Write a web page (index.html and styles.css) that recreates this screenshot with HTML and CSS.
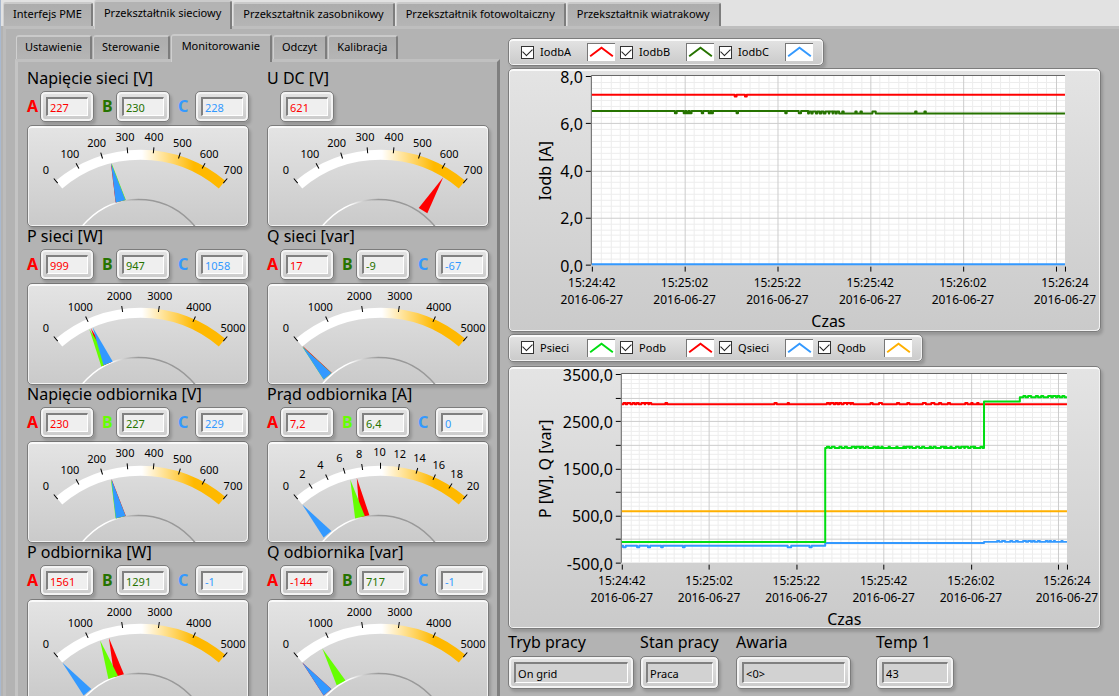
FILE: index.html
```html
<!DOCTYPE html>
<html lang="pl">
<head>
<meta charset="utf-8">
<title>Przekształtnik sieciowy</title>
<link rel="stylesheet" href="styles.css">
</head>
<body>
<div class="app">
  <nav class="tabs tabs-main">
    <button class="tab">Interfejs PME</button>
    <button class="tab tab-active">Przekształtnik sieciowy</button>
    <button class="tab">Przekształtnik zasobnikowy</button>
    <button class="tab">Przekształtnik fotowoltaiczny</button>
    <button class="tab">Przekształtnik wiatrakowy</button>
  </nav>
  <div class="workspace">
    <section class="side">
      <nav class="tabs tabs-inner">
        <button class="tab">Ustawienie</button>
        <button class="tab">Sterowanie</button>
        <button class="tab tab-active">Monitorowanie</button>
        <button class="tab">Odczyt</button>
        <button class="tab">Kalibracja</button>
      </nav>
      <div class="meters" id="meters"></div>
    </section>
    <section class="trends">
      <div class="legend panel">
        <div class="legend-item"><input type="checkbox" id="l1" checked><label for="l1">IodbA</label><svg class="swatch" viewBox="0 0 28 18" stroke="#ff0000"><path d="M2 13 L14 4 L26 13"/></svg></div>
        <div class="legend-item"><input type="checkbox" id="l2" checked><label for="l2">IodbB</label><svg class="swatch" viewBox="0 0 28 18" stroke="#267300"><path d="M2 13 L14 4 L26 13"/></svg></div>
        <div class="legend-item"><input type="checkbox" id="l3" checked><label for="l3">IodbC</label><svg class="swatch" viewBox="0 0 28 18" stroke="#3399ff"><path d="M2 13 L14 4 L26 13"/></svg></div>
      </div>
      <div class="chart panel" id="chart-current"></div>
      <div class="legend panel">
        <div class="legend-item"><input type="checkbox" id="l4" checked><label for="l4">Psieci</label><svg class="swatch" viewBox="0 0 28 18" stroke="#00dd11"><path d="M2 13 L14 4 L26 13"/></svg></div>
        <div class="legend-item"><input type="checkbox" id="l5" checked><label for="l5">Podb</label><svg class="swatch" viewBox="0 0 28 18" stroke="#ff0000"><path d="M2 13 L14 4 L26 13"/></svg></div>
        <div class="legend-item"><input type="checkbox" id="l6" checked><label for="l6">Qsieci</label><svg class="swatch" viewBox="0 0 28 18" stroke="#3399ff"><path d="M2 13 L14 4 L26 13"/></svg></div>
        <div class="legend-item"><input type="checkbox" id="l7" checked><label for="l7">Qodb</label><svg class="swatch" viewBox="0 0 28 18" stroke="#ffb000"><path d="M2 13 L14 4 L26 13"/></svg></div>
      </div>
      <div class="chart chart-power panel" id="chart-power"></div>
      <div class="status">
        <div class="status-item mode"><label for="s1">Tryb pracy</label><span class="field"><input id="s1" type="text" readonly value="On grid"></span></div>
        <div class="status-item state"><label for="s2">Stan pracy</label><span class="field"><input id="s2" type="text" readonly value="Praca"></span></div>
        <div class="status-item fault"><label for="s3">Awaria</label><span class="field"><input id="s3" type="text" readonly value="&lt;0&gt;"></span></div>
        <div class="status-item temp"><label for="s4">Temp 1</label><span class="field"><input id="s4" type="text" readonly value="43"></span></div>
      </div>
    </section>
  </div>
</div>
<script src="panel.js"></script>
</body>
</html>
```
FILE: styles.css
```css
* { box-sizing: border-box; }

html, body { margin: 0; height: 100%; }

body {
  background: #b3b3b3;
  color: #000;
  font: 11px/16px "Noto Sans", "Open Sans", sans-serif;
}

button, input { font: inherit; color: inherit; }

.app {
  height: 100vh;
  overflow: hidden;
  display: flex;
  flex-direction: column;
  border-left: 1px solid #a9b9cf;
}

/* Tabs */
.tabs { display: flex; align-items: flex-end; gap: 1px; }

.tab {
  height: 24px;
  padding: 0 9px 2px;
  border: 1px solid #d0d0d0;
  border-top: 2px solid #cacaca;
  border-right: 2px solid #7d7d7d;
  border-bottom: 0;
  border-radius: 3px 3px 0 0;
  background: linear-gradient(#adadad, #b5b5b5);
  white-space: nowrap;
}

.tab-active {
  position: relative;
  z-index: 1;
  padding-bottom: 6px;
  background: #b3b3b3;
}

.tabs-main {
  height: 26px;
  flex: none;
  padding-left: 2px;
  background: #e2e2e2;
}
.tabs-main .tab-active { height: 29px; margin-bottom: -3px; padding: 0 9px 6px; }

.workspace {
  flex: 1;
  min-height: 0;
  display: grid;
  grid-template-columns: minmax(0, 486fr) minmax(0, 594fr);
  gap: 8px;
  padding: 5px 18px 0 9px;
  margin-left: 2px;
  border-top: 3px solid #bebebe;
  border-left: 3px solid #bcbcbc;
}

.side { display: flex; flex-direction: column; min-height: 0; }
.tabs-inner { height: 25px; padding-left: 1px; flex: none; }
.tabs-inner .tab { padding: 0 8px 2px; }
.tabs-inner .tab-active { height: 28px; margin-bottom: -3px; padding: 0 10px 6px; }

/* Raised frames */
.panel, .field {
  border: 1px solid #7c7c7c;
  border-radius: 5px;
  background: linear-gradient(#e4e4e4, #cacaca);
  box-shadow: 2px 3px 3px rgba(0, 0, 0, .16), inset 0 0 0 2px #f4f4f4;
}
.panel { box-shadow: 2px 3px 3px rgba(0, 0, 0, .16), inset 0 2px 0 #fafafa, inset 1px 0 0 #f2f2f2, inset -1px -1px 0 #f2f2f2; }

.field { display: block; height: 31px; padding: 5px; }
.field input {
  display: block;
  width: 100%;
  height: 19px;
  padding: 0 2px;
  border: 2px solid #808080;
  border-right-color: #fff;
  border-bottom-color: #fff;
  border-width: 2px 1px 1px 2px;
  background: #efefef;
  outline: 0;
}

/* Meters */
.meters {
  flex: 1;
  min-height: 0;
  display: grid;
  grid-template-columns: repeat(2, minmax(0, 1fr));
  grid-auto-rows: min-content;
  column-gap: 18px;
  padding: 7px 8px 0 9px;
  border-top: 3px solid #c0c0c0;
  border-left: 3px solid #c4c4c4;
  border-right: 3px solid #7f7f7f;
}

.meter-title, .status-item label { font-size: 16px; line-height: 22px; font-weight: 400; margin: 0; white-space: nowrap; }
.meter-title { line-height: 18px; margin-bottom: 4px; }

.readings {
  display: grid;
  grid-template-columns: 13px 1fr 22px 1fr 25px 1fr;
  margin-bottom: 3px;
}
.readings label { font-size: 16px; line-height: 31px; font-weight: 700; }
.readings label + .field + label { padding-left: 8px; }
.readings .single { grid-column: 2; }
.phase-a { color: #ff0000; }
.phase-b { color: #267300; }
.phase-b-bright { color: #66ff00; }
.phase-c { color: #3399ff; }

.gauge { display: block; overflow: hidden; }
.gauge svg, .chart svg { display: block; width: 100%; height: auto; }
.chart svg { overflow: visible; }
svg text { font-family: "Noto Sans", "Open Sans", sans-serif; fill: #000; }
.scale-label { font-size: 11px; text-anchor: middle; }
.gauge-tick, .axis-tick { stroke: #000; fill: none; }

/* Trends */
.trends { padding-top: 4px; }

.legend {
  display: flex;
  width: max-content;
  height: 28px;
  padding: 0 10px 0 12px;
  align-items: center;
  gap: 5px;
}
.legend-item { display: flex; align-items: center; }
.legend-item label { width: 47px; font-size: 11px; }
.legend-item input {
  appearance: none;
  width: 13px;
  height: 13px;
  margin: 0 6px 0 0;
  border: 1px solid #333;
  background: #fff;
  display: grid;
  place-items: center;
}
.legend-item input:checked::before {
  content: "";
  width: 8px;
  height: 5px;
  margin-bottom: 3px;
  border-left: 1px solid #222;
  border-bottom: 1px solid #222;
  transform: rotate(-45deg);
}
.swatch {
  width: 28px;
  height: 18px;
  background: #fff;
  border-top: 1px solid #777;
  border-left: 1px solid #777;
  fill: none;
  stroke-width: 2;
}

.chart { margin: 2px 0; }
.chart-power { margin-top: 4px; }
.axis-value { font-size: 16px; text-anchor: end; }
.axis-title { font-size: 16px; text-anchor: middle; }
.axis-time { font-size: 12px; text-anchor: middle; }
.trace { fill: none; stroke-width: 2; stroke-linejoin: round; }

/* Status row */
.status { display: flex; align-items: flex-start; }
.status-item label { display: block; margin-bottom: 3px; }
.status-item .field { height: 33px; }
.status-item .field input { height: 21px; background: #d2d2d2; }
.mode { flex: 0 1 126px; margin-right: 6px; }
.state { flex: 0 1 79px; margin-right: 17px; }
.fault { flex: 0 1 115px; margin-right: 25px; }
.temp { flex: 0 1 78px; }
```
FILE: panel.js
```javascript
const RED = "#ff0000", LIME = "#66ff00", BLUE = "#3399ff";

const VOLTS = { max: 700, step: 100 };
const WATTS = { max: 5000, step: 1000 };
const AMPS = { max: 20, step: 2 };

const meters = [
  { title: "Napięcie sieci [V]", scale: VOLTS, values: ["227", "230", "228"] },
  { title: "U DC [V]", scale: VOLTS, values: ["621"] },
  { title: "P sieci [W]", scale: WATTS, values: ["999", "947", "1058"] },
  { title: "Q sieci [var]", scale: WATTS, values: ["17", "-9", "-67"] },
  { title: "Napięcie odbiornika [V]", scale: VOLTS, values: ["230", "227", "229"], bright: true },
  { title: "Prąd odbiornika [A]", scale: AMPS, values: ["7,2", "6,4", "0"], bright: true },
  { title: "P odbiornika [W]", scale: WATTS, values: ["1561", "1291", "-1"] },
  { title: "Q odbiornika [var]", scale: WATTS, values: ["-144", "717", "-1"] }
];

/* Gauge geometry: a sweep of 80.6 degrees around a centre below the frame. */
const CX = 113.5, CY = 155.7, HALF = 40.3;

function polar(r, deg, shift = 0) {
  const a = deg * Math.PI / 180;
  return [CX + r * Math.sin(a) + shift * Math.cos(a), CY - r * Math.cos(a) + shift * Math.sin(a)]
    .map(n => n.toFixed(1)).join(" ");
}

function gauge(meter, index) {
  const { max, step } = meter.scale;
  const angle = v => -HALF + 2 * HALF * Math.min(Math.max(v, 0), max) / max;
  let out = `<svg viewBox="1 1 220 100"><defs><linearGradient id="band${index}" gradientUnits="userSpaceOnUse" x1="115" x2="167" y1="0" y2="0">
    <stop offset="0" stop-color="#fff"/><stop offset="1" stop-color="#ffb900"/></linearGradient>
    <linearGradient id="hub${index}" x1="0" x2="1" y1="0" y2="0"><stop offset=".3" stop-color="#fff"/><stop offset=".5" stop-color="#999"/></linearGradient></defs>`;
  out += `<path d="M${polar(126, -HALF)} A126 126 0 0 1 ${polar(126, HALF)}" fill="none" stroke="url(#band${index})" stroke-width="10"/>`;
  out += `<circle cx="111.5" cy="147" r="72.5" fill="none" stroke="url(#hub${index})" stroke-width="1.5"/>`;
  for (let v = 0; v <= max; v += step) {
    const a = angle(v), [x, y] = polar(144.5, a).split(" ").map(Number);
    out += `<path class="gauge-tick" d="M${polar(128, a)} L${polar(134, a)}"/>`;
    out += `<text class="scale-label" x="${(Math.min(x, 208) - 1).toFixed(1)}" y="${(y + 4).toFixed(1)}">${v}</text>`;
  }
  const colors = [RED, LIME, BLUE];
  meter.values.forEach((text, i) => {
    const a = angle(parseFloat(text.replace(",", ".")));
    out += `<path fill="${colors[i]}" d="M${polar(121, a)} L${polar(82, a, -5)} L${polar(82, a, 5)} Z"/>`;
  });
  return out + "</svg>";
}

document.getElementById("meters").innerHTML = meters.map((m, i) => {
  const single = m.values.length === 1;
  const readings = m.values.map((v, k) => {
    const id = `m${i}-${k}`, phase = "phase-" + "abc"[k];
    const letter = k === 1 && m.bright ? "phase-b-bright" : phase;
    const label = single ? "" : `<label class="${letter}" for="${id}">${"ABC"[k]}</label>`;
    return `${label}<span class="field ${single ? "single" : ""}"><input class="${phase}" id="${id}" type="text" readonly aria-label="${m.title}" value="${v}"></span>`;
  }).join("");
  return `<article><h2 class="meter-title">${m.title}</h2><div class="readings">${readings}</div><div class="gauge panel">${gauge(m, i)}</div></article>`;
}).join("");

/* Flat base level, broken by short excursions to another level at the given times. */
function level(from, to, base, alt, bumps) {
  const pts = [[from, base]];
  bumps.forEach(([t, w]) => pts.push([t, base], [t, alt], [t + w, alt], [t + w, base]));
  pts.push([to, base]);
  return pts;
}

function ripple(from, to, every) {
  const bumps = [];
  let t = from, seed = 7;
  while (t < to) {
    seed = (seed * 31 + 11) % 97;
    bumps.push([t, 0.3 + (seed % 3) * 0.2]);
    t += 0.7 + (seed / 97) * every;
  }
  return bumps;
}

function chart(id, c) {
  const px = t => c.left + t * (c.right - c.left) / 102;
  const py = v => c.bottom - (v - c.min) * (c.bottom - c.top) / (c.max - c.min);
  const snap = n => Math.round(n) + 0.5;
  const w = c.right - c.left, h = c.bottom - c.top;
  let out = `<svg viewBox="1 1 592 262"><rect x="${c.left}" y="${c.top}" width="${w}" height="${h}" fill="#fff"/>`;
  let minor = "", major = "", ticks = "";
  for (let t = 2; t < 102; t += 2) {
    const d = `M${snap(px(t))} ${c.top}V${c.bottom}`;
    if (t % 20) minor += d; else major += d;
  }
  for (let i = 1; i < c.rows * c.sub; i++) {
    const d = `M${c.left} ${snap(c.top + i * h / (c.rows * c.sub))}H${c.right}`;
    if (i % c.sub) minor += d; else major += d;
  }
  out += `<path d="${minor}" stroke="#ededed"/><path d="${major}" stroke="#cccccc"/>`;
  out += `<path d="M${c.left - 0.5} ${c.bottom}V${c.top - 0.5}H${c.right}" fill="none" stroke="#666"/>`;
  for (let i = 0; i <= c.rows; i++) ticks += `M${c.left - 6} ${snap(c.bottom - i * h / c.rows)}h5`;
  [0, 20, 40, 60, 80, 100, 102].forEach(t => ticks += `M${snap(px(t))} ${c.bottom + 2}v5`);
  out += `<path class="axis-tick" d="${ticks}"/>`;
  c.labels.forEach(v => out += `<text class="axis-value" x="${c.left - 9}" y="${py(v) + 7}">${v},0</text>`);
  [[0, "15:24:42"], [20, "15:25:02"], [40, "15:25:22"], [60, "15:25:42"], [80, "15:26:02"], [102, "15:26:24"]].forEach(([t, s]) => {
    out += `<text class="axis-time" x="${px(t)}" y="${c.bottom + 22}">${s}</text><text class="axis-time" x="${px(t)}" y="${c.bottom + 39}">2016-06-27</text>`;
  });
  out += `<text class="axis-title" x="${(c.left + c.right) / 2}" y="${c.bottom + 62}">Czas</text>`;
  out += `<text class="axis-title" transform="translate(43 103) rotate(-90)">${c.title}</text>`;
  c.traces.forEach(([color, pts]) => {
    out += `<polyline class="trace" stroke="${color}" points="${pts.map(([t, v]) => px(t).toFixed(1) + "," + py(v).toFixed(1)).join(" ")}"/>`;
  });
  document.getElementById(id).innerHTML = out + "</svg>";
}

chart("chart-current", {
  title: "Iodb [A]", left: 84, right: 558, top: 8, bottom: 197, min: 0, max: 8, rows: 4, sub: 8,
  labels: [0, 2, 4, 6, 8],
  traces: [
    [RED, level(0, 102, 7.2, 7.13, [[30.8, 0.4], [33, 0.4]])],
    ["#267300", [
      ...level(0, 46.6, 6.52, 6.42, [[17.9, 0.4], [19.8, 0.3], [20.4, 0.4], [21.1, 0.4], [23.7, 0.3], [25.2, 0.3], [25.8, 0.3], [31.2, 0.3], [41.7, 0.3], [44.6, 0.5]]),
      ...level(46.6, 102, 6.41, 6.49, [...ripple(46.8, 53, 0.3), [54, 0.3], [56.8, 0.3], [57.9, 0.3], [60.5, 0.7], [69.7, 0.3], [71.7, 0.3]])
    ]],
    [BLUE, [[0, 0.02], [102, 0.02]]]
  ]
});

chart("chart-power", {
  title: "P [W], Q [var]", left: 114, right: 560, top: 8, bottom: 197, min: -500, max: 3500, rows: 8, sub: 5,
  labels: [-500, 500, 1500, 2500, 3500],
  traces: [
    [RED, level(0, 102, 2860, 2885, [...ripple(0.4, 7, 0.5), [10, 0.4], [35, 0.5], [38, 0.3], ...ripple(47, 53, 0.4), ...ripple(57, 82, 3.5)])],
    ["#ffb000", [[0, 590], [102, 590]]],
    [BLUE, [
      ...level(0, 46.6, -145, -172, [[0.3, 0.6], [3.5, 0.5], [6, 0.5], [9, 0.4], [14, 0.4], [38, 0.8], [43, 0.5]]),
      [46.6, -85], [83, -85], ...level(83, 102, -60, -42, ripple(86, 102, 1.2))
    ]],
    ["#00dd11", [
      [0, -65], [46.6, -65],
      ...level(46.6, 83, 1930, 1958, ripple(47, 82.5, 1.1)),
      [83, 2915], [91.2, 2915],
      ...level(91.2, 102, 3010, 3035, ripple(92, 101, 1.1))
    ]]
  ]
});
```
